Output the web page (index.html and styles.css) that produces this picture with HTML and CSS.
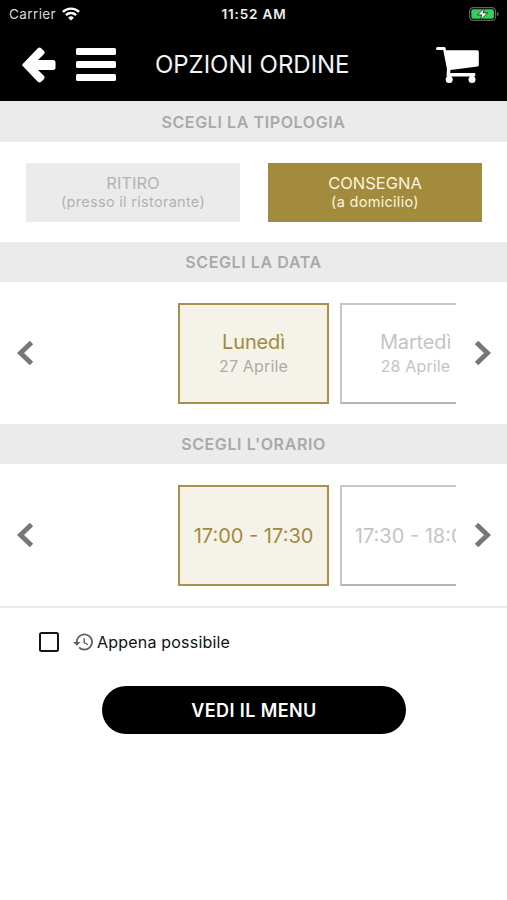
FILE: index.html
```html
<!DOCTYPE html>
<html lang="it">
<head>
<meta charset="utf-8">
<title>Opzioni ordine</title>
<link rel="stylesheet" href="styles.css">
</head>
<body>
<header class="top">
  <div class="status">
    <div class="carrier"><span>Carrier</span>
      <svg class="wifi" width="18" height="14" viewBox="0 0 18 14" fill="none" stroke="#fff" stroke-width="2.4"><path d="M.9 4.9a11.6 11.6 0 0 1 16.2 0M3.9 8.1a7.3 7.3 0 0 1 10.2 0"/><path d="M9 13.6 6.1 10.7a4.1 4.1 0 0 1 5.8 0z" fill="#fff" stroke="none"/></svg>
    </div>
    <span class="clock">11:52 AM</span>
    <svg class="battery" width="30" height="14" viewBox="0 0 30 14"><rect x=".6" y=".6" width="26" height="12.8" rx="3.8" fill="none" stroke="#626262" stroke-width="1.2"/><rect x="2.3" y="2.3" width="22.6" height="9.4" rx="2" fill="#35cf5b"/><path d="M28 4.8c2.3.8 2.3 3.6 0 4.400z" fill="#626262"/><path d="M15.300 1 8.500 7.900h4.200L11.500 13l7.200-7.100h-4.500z" fill="#fff" stroke="#07180b" stroke-width=".8"/></svg>
  </div>
  <div class="nav">
    <svg class="back" width="34" height="36" viewBox="0 0 34 36"><path d="M.7 17a1.500 1.500 0 0 0 0 2L15.800 34.800a2.500 2.500 0 0 0 3.400 0l2.600-2.600a2.400 2.400 0 0 0 0-3.400L16 23H31a2.500 2.500 0 0 0 2.500-2.500v-5A2.500 2.500 0 0 0 31 13H16L21.800 7.200a2.400 2.400 0 0 0 0-3.400L19.200 1.200a2.500 2.500 0 0 0-3.400 0z" fill="#fff"/></svg>
    <div class="burger"><i></i><i></i><i></i></div>
    <h1>OPZIONI ORDINE</h1>
    <svg class="cart" width="43" height="37" viewBox="0 0 43 37" fill="#fff"><path d="M1.500 0H8.200a1.500 1.500 0 0 1 1.400 1.200L10 3.200H41.300a1.500 1.500 0 0 1 1.500 1.500V18a1.500 1.500 0 0 1-1.300 1.500L14.500 23l-.4 3H38a1.400 1.400 0 0 1 1.400 1.400V28a1.400 1.400 0 0 1-1.400 1.400H12a1.500 1.500 0 0 1-1.500-1.500L11 22 7.200 3H1.500a1.500 1.500 0 0 1 0-3z"/><path d="M11.200 28h4v3h-4zM34 28h4v3h-4z"/><circle cx="13.200" cy="32.500" r="3.500"/><circle cx="36" cy="32.500" r="3.500"/></svg>
  </div>
</header>
<main>
  <h2 class="type-title">SCEGLI LA TIPOLOGIA</h2>
  <section class="types">
    <button class="type"><span class="name">RITIRO</span><span class="note">(presso il ristorante)</span></button>
    <button class="type active"><span class="name">CONSEGNA</span><span class="note">(a domicilio)</span></button>
  </section>
  <h2>SCEGLI LA DATA</h2>
  <section class="picker">
    <svg class="chev" width="17" height="26" viewBox="0 0 17 26"><path d="M14.500 2.500 3.500 13l11 10.500"/></svg>
    <div class="track">
      <div class="card selected"><span class="day">Lunedì</span><span class="date">27 Aprile</span></div>
      <div class="card"><span class="day">Martedì</span><span class="date">28 Aprile</span></div>
    </div>
    <svg class="chev" width="17" height="26" viewBox="0 0 17 26"><path d="M2.500 2.500 13.500 13l-11 10.500"/></svg>
  </section>
  <h2>SCEGLI L'ORARIO</h2>
  <section class="picker last">
    <svg class="chev" width="17" height="26" viewBox="0 0 17 26"><path d="M14.500 2.500 3.500 13l11 10.500"/></svg>
    <div class="track">
      <div class="card selected"><span class="time">17:00 - 17:30</span></div>
      <div class="card"><span class="time">17:30 - 18:00</span></div>
    </div>
    <svg class="chev" width="17" height="26" viewBox="0 0 17 26"><path d="M2.500 2.500 13.500 13l-11 10.500"/></svg>
  </section>
  <label class="asap">
    <span class="box"></span>
    <svg class="history" width="20" height="18" viewBox="1 3 21 18" fill="#606060"><path d="M13 3a9 9 0 0 0-9 9H1l3.890 3.890.07.14L9 12H6c0-3.870 3.130-7 7-7s7 3.130 7 7-3.130 7-7 7c-1.930 0-3.680-.79-4.940-2.060l-1.420 1.420A8.954 8.954 0 0 0 13 21a9 9 0 0 0 0-18zm-1 5v5l4.280 2.540.72-1.210-3.500-2.080V8H12z"/></svg>
    <span class="asap-text">Appena possibile</span>
  </label>
  <button class="submit">VEDI IL MENU</button>
</main>
</body>
</html>
```
FILE: styles.css
```css
* { box-sizing: border-box; }
body { margin: 0; width: 507px; height: 900px; overflow: hidden; background: #fff; font-family: Inter, sans-serif; }
button { border: 0; padding: 0; font-family: inherit; }
h1, h2 { margin: 0; }
svg { display: block; flex: none; }
.top { height: 101px; background: #000; color: #fff; }
.status { height: 27px; display: grid; grid-template-columns: 1fr auto 1fr; align-items: center; padding: 0 8px 0 9px; }
.carrier { display: flex; align-items: center; gap: 6px; font-size: 13.500px; letter-spacing: .4px; color: #d8d8d8; }
.clock { font-size: 13.500px; font-weight: 600; letter-spacing: .85px; color: #eee; }
.battery { justify-self: end; }
.nav { height: 74px; display: flex; align-items: center; padding: 2px 28px 0 22px; }
.burger { width: 40px; height: 33px; margin: -1px 0 0 20px; display: flex; flex-direction: column; justify-content: space-between; }
.burger i { height: 7px; border-radius: 1.500px; background: #fff; }
h1 { margin: -1px 0 0 39px; font-size: 24px; font-weight: 400; line-height: 30px; letter-spacing: -.03px; white-space: nowrap; color: #f4f4f4; }
.cart { margin-left: auto; }
h2 { height: 40px; background: #ebebeb; color: #a9a9ab; text-align: center; font-size: 16px; line-height: 40px; font-weight: 600; letter-spacing: .6px; }
h2.type-title { height: 41px; line-height: 42px; }
.types { height: 100px; padding: 21px 25px 0 26px; display: flex; justify-content: space-between; }
.type { width: 214px; height: 59px; padding-bottom: 1px; display: flex; flex-direction: column; align-items: center; justify-content: center; background: #ebebeb; color: #b2b2b3; }
.type.active { background: #a28b3d; color: #fff3dc; }
.name { font-size: 16.500px; line-height: 20px; letter-spacing: 0; }
.note { font-size: 14.500px; line-height: 18px; letter-spacing: .3px; }
.picker { height: 142px; display: flex; align-items: center; padding: 0 16px 0 17px; }
.picker.last { height: 144px; border-bottom: 2px solid #ebebeb; }
.chev { fill: none; stroke: #777; stroke-width: 4.900; }
.track { width: 405px; height: 101px; margin: 0 auto 0 17px; padding-left: 127px; overflow: hidden; display: flex; gap: 11px; }
.card { width: 151px; height: 101px; flex: none; border: 2px solid #c5c6c8; border-bottom-color: #b5b5b7; display: flex; flex-direction: column; align-items: center; justify-content: center; color: #c4c4c6; white-space: nowrap; }
.card.selected { border-color: #a8924a; background: #f5f2ea; color: #a18c3c; }
.day { font-size: 20px; line-height: 26px; letter-spacing: -.15px; }
.date { font-size: 16px; line-height: 23px; letter-spacing: .15px; color: #c4c4c6; }
.selected .date { color: #acacaa; }
.time { padding-top: 1px; font-size: 20px; line-height: 26px; }
.asap { height: 67px; display: flex; align-items: center; padding-left: 39px; }
.box { width: 20px; height: 20px; border: 2px solid #151515; border-radius: 2.500px; }
.history { margin-left: 14px; }
.asap-text { margin-left: 4px; font-size: 16px; letter-spacing: .2px; color: #111; }
.submit { display: block; width: 304px; height: 48px; margin: 11px 0 0 102px; border-radius: 24px; background: #000; color: #fff; font-size: 18px; font-weight: 600; letter-spacing: .4px; }
```
